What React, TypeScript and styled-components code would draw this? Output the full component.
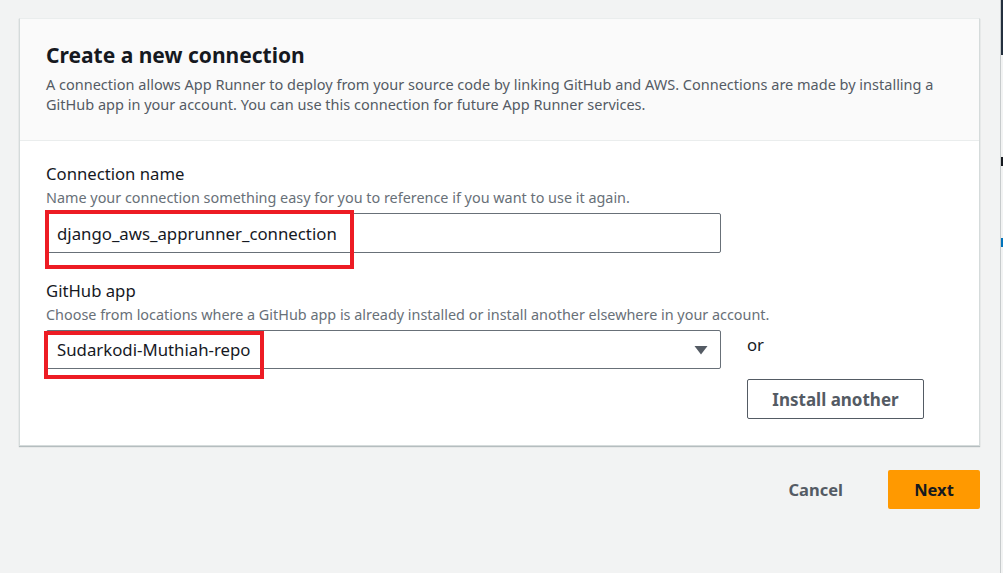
import React from "react";
import styled, { createGlobalStyle } from "styled-components";

const Global = createGlobalStyle`
  html, body { margin: 0; padding: 0; background: #f2f3f3; }
  body { font-family: "Noto Sans", "Open Sans", Arial, sans-serif; color: #16191f; }
  * { box-sizing: border-box; }
`;

const Page = styled.div`
  display: flex;
  width: 1003px;
  height: 573px;
  overflow: hidden;
  background: #f2f3f3;
`;

const Main = styled.div`
  flex: 0 0 1000px;
  padding: 18px 20px 0 19px;
  display: flex;
  flex-direction: column;
`;

const Gutter = styled.div`
  flex: 0 0 3px;
  border-left: 1px solid #c7cbcc;
  display: flex;
  flex-direction: column;
`;

const GutterMark = styled.div<{ $h: number; $c: string; $mt?: number }>`
  height: ${(p) => p.$h}px;
  margin-top: ${(p) => p.$mt ?? 0}px;
  background: ${(p) => p.$c};
`;

const Card = styled.div`
  background: #ffffff;
  border: 1px solid #d5dbdb;
  border-top-color: #eaeded;
  box-shadow: 0 1px 1px 0 rgba(0, 28, 36, 0.25);
  display: flex;
  flex-direction: column;
`;

const CardHeader = styled.div`
  background: #fafafa;
  border-bottom: 1px solid #eaeded;
  padding: 23px 26px 0 26px;
  height: 122px;
`;

const Title = styled.h2`
  margin: 0;
  font-size: 21px;
  line-height: 27px;
  font-weight: 700;
  color: #16191f;
`;

const HeaderDesc = styled.p`
  margin: 6px 0 0 0;
  font-size: 14.5px;
  line-height: 19.5px;
  color: #545b64;
`;

const CardBody = styled.div`
  padding: 22px 26px 0 26px;
  height: 304px;
  display: flex;
  flex-direction: column;
`;

const Field = styled.div<{ $mt?: number }>`
  display: flex;
  flex-direction: column;
  margin-top: ${(p) => p.$mt ?? 0}px;
`;

const Label = styled.div`
  font-size: 16.7px;
  line-height: 22px;
  color: #16191f;
`;

const Hint = styled.div`
  font-size: 14.4px;
  line-height: 18px;
  color: #687078;
  margin-top: 4px;
`;

const Row = styled.div`
  display: flex;
  align-items: flex-start;
  margin-top: 6px;
`;

const InputWrap = styled.div`
  position: relative;
  width: 675px;
`;

const Input = styled.div`
  height: 40px;
  width: 675px;
  border: 1px solid #687078;
  border-radius: 2px;
  background: #fff;
  padding: 0 10px;
  display: flex;
  align-items: center;
  font-size: 16.8px;
  color: #16191f;
`;

const Select = styled(Input)`
  height: 39px;
  justify-content: space-between;
  padding-right: 12px;
`;

const Highlight = styled.div<{ $l: number; $t: number; $w: number; $h: number }>`
  position: absolute;
  left: ${(p) => p.$l}px;
  top: ${(p) => p.$t}px;
  width: ${(p) => p.$w}px;
  height: ${(p) => p.$h}px;
  border: 4.5px solid #ed1c24;
  pointer-events: none;
`;

const Side = styled.div`
  margin-left: 26px;
  display: flex;
  flex-direction: column;
  align-items: flex-start;
`;

const Or = styled.div`
  font-size: 16.7px;
  line-height: 22px;
  color: #16191f;
  margin-top: 4px;
`;

const SecondaryButton = styled.button`
  margin-top: 23px;
  width: 177px;
  height: 40px;
  border: 1px solid #545b64;
  border-radius: 2px;
  background: #fff;
  color: #545b64;
  font-family: inherit;
  font-size: 17px;
  font-weight: 700;
  padding: 0;
`;

const Actions = styled.div`
  display: flex;
  justify-content: flex-end;
  align-items: center;
  margin-top: 24px;
  gap: 45px;
`;

const LinkButton = styled.button`
  border: none;
  background: transparent;
  color: #545b64;
  font-family: inherit;
  font-size: 16.5px;
  font-weight: 700;
  padding: 0;
`;

const PrimaryButton = styled.button`
  width: 92px;
  height: 39px;
  border: none;
  border-radius: 2px;
  background: #ff9900;
  color: #16191f;
  font-family: inherit;
  font-size: 16.5px;
  font-weight: 700;
  padding: 0;
`;

const Caret = () => (
  <svg width="14" height="10" viewBox="0 0 14 10">
    <path d="M0.5 1 H13.5 L7 9.5 Z" fill="#545b64" />
  </svg>
);

export default function App() {
  return (
    <Page>
      <Global />
      <Main>
        <Card>
          <CardHeader>
            <Title>Create a new connection</Title>
            <HeaderDesc>
              A connection allows App Runner to deploy from your source code by linking GitHub and AWS. Connections are made by installing a
              <br />
              GitHub app in your account. You can use this connection for future App Runner services.
            </HeaderDesc>
          </CardHeader>
          <CardBody>
            <Field>
              <Label>Connection name</Label>
              <Hint>Name your connection something easy for you to reference if you want to use it again.</Hint>
              <Row>
                <InputWrap>
                  <Input>django_aws_apprunner_connection</Input>
                  <Highlight $l={-1} $t={-3} $w={309} $h={59} />
                </InputWrap>
              </Row>
            </Field>
            <Field $mt={27}>
              <Label>GitHub app</Label>
              <Hint>Choose from locations where a GitHub app is already installed or install another elsewhere in your account.</Hint>
              <Row>
                <InputWrap>
                  <Select>
                    <span>Sudarkodi-Muthiah-repo</span>
                    <Caret />
                  </Select>
                  <Highlight $l={-2} $t={1} $w={220} $h={48} />
                </InputWrap>
                <Side>
                  <Or>or</Or>
                  <SecondaryButton>Install another</SecondaryButton>
                </Side>
              </Row>
            </Field>
          </CardBody>
        </Card>
        <Actions>
          <LinkButton>Cancel</LinkButton>
          <PrimaryButton>Next</PrimaryButton>
        </Actions>
      </Main>
      <Gutter>
        <GutterMark $h={55} $c="#232f3e" />
        <GutterMark $h={9} $c="#16191f" $mt={102} />
        <GutterMark $h={9} $c="#0073bb" $mt={72} />
      </Gutter>
    </Page>
  );
}
